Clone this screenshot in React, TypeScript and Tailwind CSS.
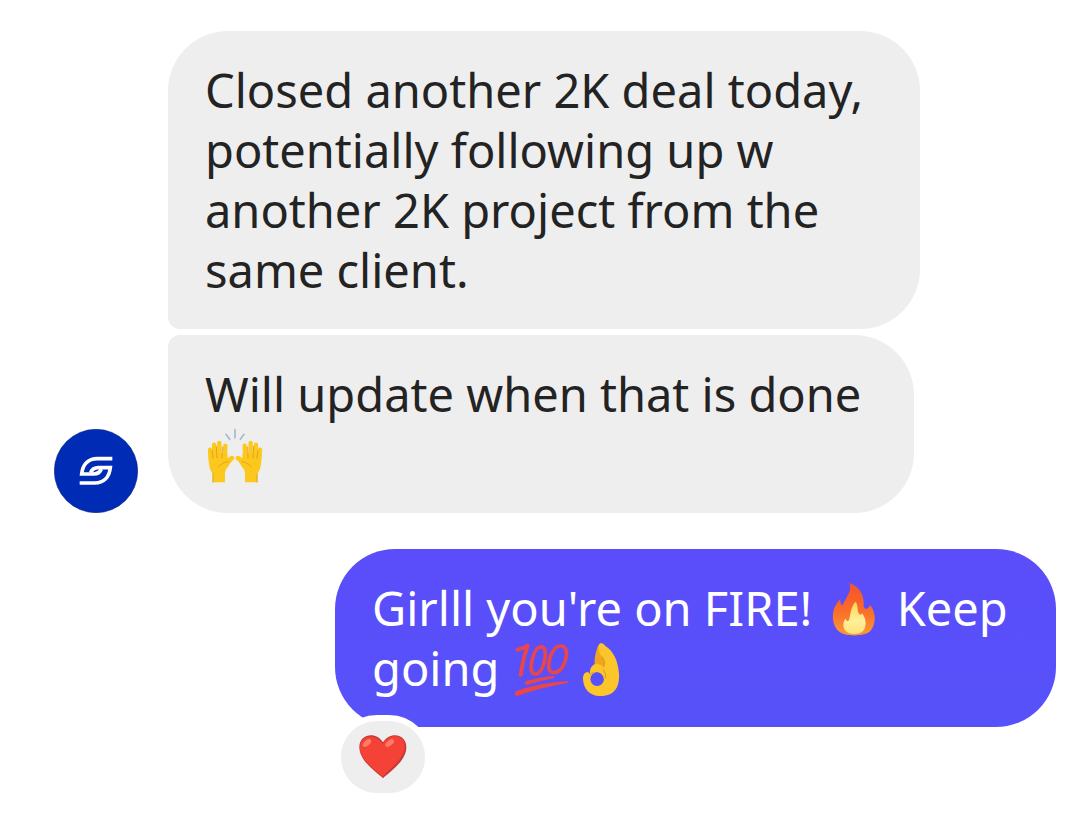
import type { ReactNode } from "react";

const emojiClass = "mx-[2px] inline-block size-14 align-[-12px]";

function RaisedHand() {
    return (
        <g>
            <path
                d="M38 112 Q36 100 38 96 L94 96 L95 112 Q101 105 108 104 Q117 106 115 113 C104 122 98 136 91 144 Q87 150 87 158 V184 H50 V158 Q38 146 38 112Z"
                fill="#fcc81d"
            />
            <path
                d="M42 86 L45 122 M54 71 L57 120 M70 66 V118 M88 74 L86 118"
                stroke="#fcc81d"
                strokeWidth="13"
                strokeLinecap="round"
            />
            <path
                d="M48 88 L51 112 M61 76 L63 110 M79 78 L78 110 M68 138 Q78 124 96 122 M51 158 V183"
                stroke="#e6a31b"
                strokeWidth="3"
                strokeLinecap="round"
                fill="none"
            />
        </g>
    );
}

function RaisingHands() {
    return (
        <svg viewBox="33 21 168 168" role="img" aria-label="🙌" className={emojiClass}>
            <RaisedHand />
            <g transform="translate(234 0) scale(-1 1)">
                <RaisedHand />
            </g>
            <path
                d="M117 26 V50 M90 40 L101 55 M144 40 L133 55"
                stroke="#a9b9c6"
                strokeWidth="5"
                strokeLinecap="round"
            />
        </svg>
    );
}

function Fire() {
    return (
        <svg viewBox="9 33 168 168" role="img" aria-label="🔥" className={emojiClass}>
            <defs>
                <linearGradient id="flame" x1="0" y1="0" x2="0" y2="1">
                    <stop offset="0" stopColor="#f4512c" />
                    <stop offset="0.55" stopColor="#f96f2a" />
                    <stop offset="1" stopColor="#fb9a35" />
                </linearGradient>
                <linearGradient id="core" x1="0" y1="0" x2="0" y2="1">
                    <stop offset="0" stopColor="#ffd34f" />
                    <stop offset="0.6" stopColor="#fff09a" />
                    <stop offset="1" stopColor="#ffe27a" />
                </linearGradient>
            </defs>
            <path
                d="M79 36 C110 46 125 72 122 108 C128 118 138 114 140 102 C158 118 162 158 142 180 C126 196 70 198 50 183 C28 168 25 132 35 108 C40 98 46 91 52 84 C51 92 53 99 58 104 C64 90 70 82 76 70 C82 58 83 46 79 36Z"
                fill="url(#flame)"
            />
            <path
                d="M98 92 C106 104 102 118 108 128 C111 133 115 131 117 127 C129 140 132 165 121 179 C109 192 79 192 68 180 C58 168 60 151 68 143 C70 150 75 153 78 147 C84 128 82 108 98 92Z"
                fill="url(#core)"
            />
        </svg>
    );
}

function Hundred() {
    return (
        <svg viewBox="33 33 168 168" role="img" aria-label="💯" className={emojiClass}>
            <g stroke="#e8454c" strokeLinecap="round" strokeLinejoin="round" fill="none">
                <path d="M43 56 Q58 54 74 44 Q60 84 53 132" strokeWidth="12" />
                <path
                    d="M112 48 C128 46 130 66 124 92 C118 116 108 130 97 129 C82 128 82 108 88 84 C94 62 102 49 112 48Z"
                    strokeWidth="11"
                />
                <path
                    d="M172 45 C192 45 194 66 187 88 C180 112 166 126 152 125 C136 124 134 104 141 80 C148 58 158 45 172 45Z"
                    strokeWidth="11"
                />
            </g>
            <path d="M68 150 Q105 139 152 134 Q157 139 152 142 Q108 150 70 163 Q63 158 68 150Z" fill="#e8454c" />
            <path d="M39 180 Q110 155 194 150 Q198 153 190 157 Q104 172 41 196 Q32 190 39 180Z" fill="#e8454c" />
        </svg>
    );
}

function OkHand() {
    return (
        <svg viewBox="216 33 168 168" role="img" aria-label="👌" className={emojiClass}>
            <path
                d="M278 100 Q276 78 286 50 Q291 35 300 40 L322 80 L312 118 Z"
                fill="#f0a51c"
            />
            <path
                fillRule="evenodd"
                d="M297 36 Q306 37 310 45 C334 60 348 88 351 128 C354 176 330 196 293 195 C262 194 244 172 243 143 C243 130 249 122 258 124 C262 125 264 128 264 131 Q260 110 278 99 Q290 96 304 106 Q310 94 301 78 Q288 64 290 44 Q292 36 297 36Z M284 123 Q266 127 265 144 Q267 164 285 165 Q304 164 306 145 Q303 125 284 123Z"
                fill="#fcc62a"
            />
            <path
                d="M301 78 Q312 92 305 108 M304 116 Q314 128 310 140 M264 131 Q267 126 274 124"
                stroke="#dd9420"
                strokeWidth="3"
                strokeLinecap="round"
                fill="none"
            />
        </svg>
    );
}

function Heart() {
    return (
        <svg viewBox="91 118 168 168" role="img" aria-label="❤️" className="size-14">
            <path
                d="M175 266 C158 248 104 216 104 172 C104 132 155 124 175 158 C195 124 245 132 245 172 C245 216 192 248 175 266Z"
                fill="#c63a35"
            />
            <path
                d="M174 262 C154 240 106 214 106 172 C108 135 153 130 174 163 C194 128 240 134 240 169 C239 211 190 240 174 262Z"
                fill="#f44336"
            />
            <ellipse cx="127" cy="160" rx="15" ry="8" fill="#ff7b68" transform="rotate(-42 127 160)" />
            <ellipse cx="195" cy="160" rx="15" ry="8" fill="#ff7b68" transform="rotate(-38 195 160)" />
        </svg>
    );
}

function Avatar() {
    return (
        <svg viewBox="42 27 252 252" role="img" aria-label="Profile picture" className="size-[84px] shrink-0">
            <circle cx="168" cy="153" r="125" fill="#002bb5" stroke="#0a2485" strokeWidth="2" />
            <g stroke="#fff" strokeWidth="11" fill="none">
                <path d="M217 116 H172 C144 116 128 134 125 162 H160 C172 162 180 158 184 147" />
                <path d="M119 189 H164 C192 189 208 171 211 143 H176 C164 143 156 147 152 158" />
            </g>
        </svg>
    );
}

function Bubble({ className, children }: { className: string; children: ReactNode }) {
    return (
        <div className={`px-[37px] py-[29px] text-[47px] leading-[60px] ${className}`}>
            {children}
        </div>
    );
}

export default function App() {
    return (
        <main className="flex min-h-screen flex-col gap-9 bg-white pt-[31px] pr-6 pb-[87px] pl-[54px] font-['Noto_Sans',sans-serif]">
            <div className="flex items-end gap-[30px]">
                <Avatar />
                <div className="flex flex-col items-start gap-1.5 text-[#232323]">
                    <Bubble className="max-w-[752px] rounded-[60px] rounded-bl-[12px] bg-[#eeeeee]">
                        Closed another 2K deal today, potentially following up w another 2K project from the
                        same client.
                    </Bubble>
                    <Bubble className="max-w-[746px] rounded-[60px] rounded-tl-[12px] bg-[#eeeeee]">
                        Will update when that is done <RaisingHands />
                    </Bubble>
                </div>
            </div>
            <div className="relative max-w-[721px] self-end">
                <Bubble className="rounded-[60px] bg-linear-to-b from-[#5b4dfa] to-[#5652fa] text-white">
                    Girlll you're on FIRE! <Fire /> Keep going <Hundred />
                    <OkHand />
                </Bubble>
                <button
                    type="button"
                    className="absolute -bottom-[72px] left-0 flex h-[84px] w-24 items-center justify-center rounded-[42px] border-6 border-white bg-[#eeeeee]"
                >
                    <Heart />
                </button>
            </div>
        </main>
    );
}
